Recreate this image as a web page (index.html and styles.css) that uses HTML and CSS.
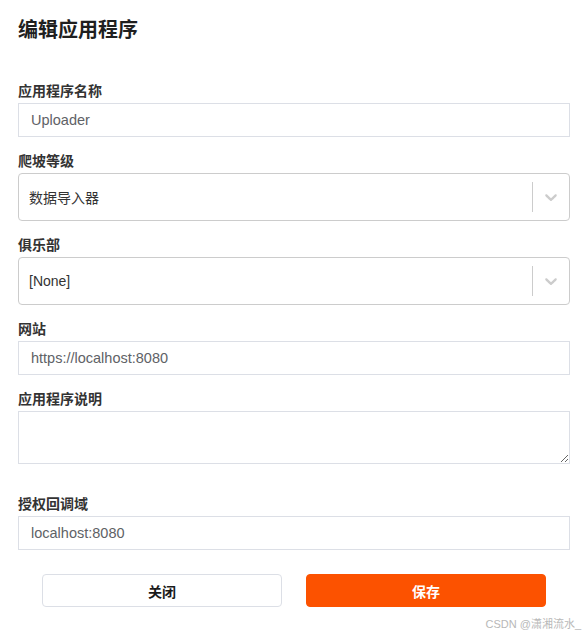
FILE: index.html
```html
<!DOCTYPE html>
<html lang="zh-CN">
<head>
<meta charset="utf-8">
<title>编辑应用程序</title>
<link rel="stylesheet" href="styles.css">
</head>
<body>
<div class="page">
  <h1 class="title">编辑应用程序</h1>
  <form class="form">
    <div class="field f1">
      <label class="label">应用程序名称</label>
      <input class="input" type="text" value="Uploader">
    </div>
    <div class="field f2">
      <label class="label">爬坡等级</label>
      <div class="select">
        <div class="select-value">数据导入器</div>
        <span class="select-sep"></span>
        <div class="select-ind">
          <svg viewBox="0 0 20 20" width="20" height="20"><path d="M4.516 7.548c0.436-0.446 1.043-0.481 1.576 0l3.908 3.747 3.908-3.747c0.533-0.481 1.141-0.446 1.574 0 0.436 0.445 0.408 1.197 0 1.615-0.406 0.418-4.695 4.502-4.695 4.502-0.217 0.223-0.502 0.335-0.787 0.335s-0.57-0.112-0.789-0.335c0 0-4.287-4.084-4.695-4.502s-0.436-1.170 0-1.615z"/></svg>
        </div>
      </div>
    </div>
    <div class="field f3">
      <label class="label">俱乐部</label>
      <div class="select">
        <div class="select-value">[None]</div>
        <span class="select-sep"></span>
        <div class="select-ind">
          <svg viewBox="0 0 20 20" width="20" height="20"><path d="M4.516 7.548c0.436-0.446 1.043-0.481 1.576 0l3.908 3.747 3.908-3.747c0.533-0.481 1.141-0.446 1.574 0 0.436 0.445 0.408 1.197 0 1.615-0.406 0.418-4.695 4.502-4.695 4.502-0.217 0.223-0.502 0.335-0.787 0.335s-0.57-0.112-0.789-0.335c0 0-4.287-4.084-4.695-4.502s-0.436-1.170 0-1.615z"/></svg>
        </div>
      </div>
    </div>
    <div class="field f4">
      <label class="label">网站</label>
      <input class="input" type="text" value="https://localhost:8080">
    </div>
    <div class="field f5">
      <label class="label">应用程序说明</label>
      <textarea class="textarea"></textarea>
    </div>
    <div class="field f6">
      <label class="label">授权回调域</label>
      <input class="input" type="text" value="localhost:8080">
    </div>
    <div class="actions">
      <button type="button" class="btn btn-close">关闭</button>
      <button type="button" class="btn btn-save">保存</button>
    </div>
  </form>
</div>
<div class="watermark">CSDN @潇湘流水_</div>
</body>
</html>
```
FILE: styles.css
```css
* { box-sizing: border-box; }
html, body { margin: 0; padding: 0; background: #fff; }
body {
  font-family: "Liberation Sans", Arial, "Noto Sans CJK SC", sans-serif;
  color: #333;
}
.page {
  padding: 16px 15px 0 18px;
}
.title {
  margin: 0;
  font-size: 20px;
  line-height: 28px;
  font-weight: bold;
  color: #1f1f1f;
}
.form {
  display: flex;
  flex-direction: column;
  margin-top: 37px;
}
.field {
  display: flex;
  flex-direction: column;
}
.f1 { margin-bottom: 14px; }
.f2 { margin-bottom: 14px; }
.f3 { margin-bottom: 14px; }
.f4 { margin-bottom: 14px; }
.f5 { margin-bottom: 30px; }
.f6 { margin-bottom: 24px; }
.label {
  display: block;
  font-size: 14px;
  line-height: 20px;
  font-weight: bold;
  color: #333;
  margin-bottom: 2px;
}
.input {
  display: block;
  width: 100%;
  height: 34px;
  border: 1px solid #dcdfe6;
  border-radius: 0;
  padding: 0 12px;
  font-family: "Liberation Sans", Arial, "Noto Sans CJK SC", sans-serif;
  font-size: 14.5px;
  color: #606266;
  background: #fff;
  outline: none;
}
.textarea {
  display: block;
  width: 100%;
  height: 53px;
  border: 1px solid #dcdfe6;
  padding: 6px 12px;
  font-family: "Liberation Sans", Arial, "Noto Sans CJK SC", sans-serif;
  font-size: 14px;
  color: #606266;
  resize: vertical;
  outline: none;
  margin: 0;
}
.select {
  display: flex;
  align-items: center;
  height: 48px;
  border: 1px solid #cccccc;
  border-radius: 4px;
  background: #fff;
}
.select-value {
  flex: 1;
  padding: 2px 8px 2px 10px;
  font-size: 14px;
  color: #333;
}
.select-sep {
  align-self: stretch;
  width: 1px;
  margin: 8px 0;
  background: #cccccc;
}
.select-ind {
  display: flex;
  padding: 8px;
  color: #cccccc;
}
.select-ind svg { fill: currentColor; display: block; }
.actions {
  display: flex;
  justify-content: center;
  gap: 24px;
  padding: 0 24px;
}
.btn {
  flex: 1;
  height: 33px;
  border-radius: 4px;
  font-family: "Liberation Sans", Arial, "Noto Sans CJK SC", sans-serif;
  font-size: 14px;
  font-weight: bold;
  cursor: pointer;
}
.btn-close {
  background: #fff;
  border: 1px solid #dcdfe6;
  color: #1a1a1a;
}
.btn-save {
  background: #fc5200;
  border: 1px solid #fc5200;
  color: #fff;
}
.watermark {
  position: absolute;
  right: 4px;
  top: 616px;
  font-size: 11px;
  line-height: 16px;
  color: #b8b8b8;
  font-family: "Liberation Sans", Arial, "Noto Sans CJK SC", sans-serif;
}
```
